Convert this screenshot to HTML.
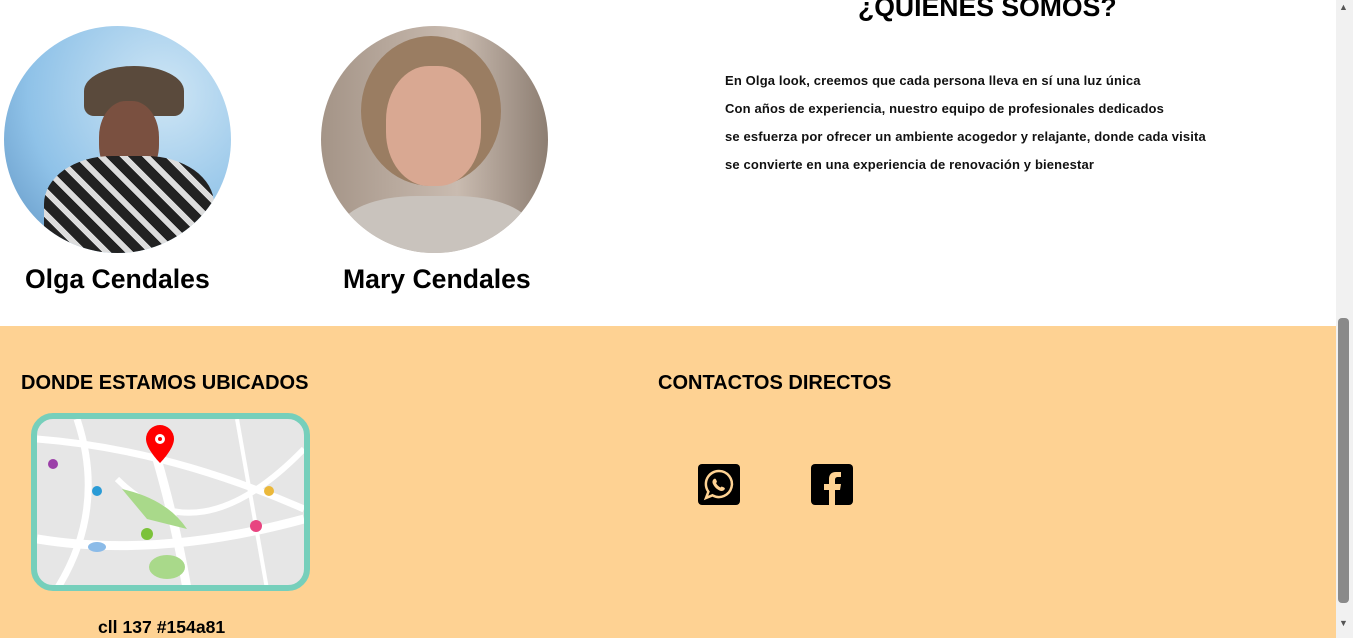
<!DOCTYPE html><html><head><style>
body{margin:0;width:1353px;height:638px;overflow:hidden;font-family:"Liberation Sans",sans-serif;background:#fff;position:relative}
.a{position:absolute}
.c{border-radius:50%;width:227px;height:227px;overflow:hidden}
.n{font-size:26.6px;font-weight:bold;white-space:nowrap}
.p{font-size:13px;letter-spacing:0.15px;font-weight:bold;line-height:28px;color:#111;white-space:nowrap}
</style></head><body>
<div class="a c" style="left:4px;top:26px;background:radial-gradient(circle at 70% 30%,#cfe6f5,#8fc2e8 60%,#5b8fbf)">
 <div class="a" style="left:80px;top:40px;width:100px;height:50px;border-radius:50% 50% 10px 10px;background:#5a4a3c"></div>
 <div class="a" style="left:95px;top:75px;width:60px;height:80px;border-radius:45%;background:#7a5040"></div>
 <div class="a" style="left:40px;top:130px;width:170px;height:120px;border-radius:40% 40% 0 0;background:repeating-linear-gradient(45deg,#222 0 10px,#ddd 10px 16px)"></div>
</div>
<div class="a c" style="left:321px;top:26px;background:linear-gradient(90deg,#a49487,#c9bbb0 60%,#8d7e72)">
 <div class="a" style="left:40px;top:10px;width:140px;height:150px;border-radius:50%;background:#9a7d62"></div>
 <div class="a" style="left:65px;top:40px;width:95px;height:120px;border-radius:45%;background:#d9a892"></div>
 <div class="a" style="left:20px;top:170px;width:190px;height:80px;border-radius:40% 40% 0 0;background:#c9c3bd"></div>
</div>
<div class="a n" style="left:25px;top:264px">Olga Cendales</div>
<div class="a n" style="left:343px;top:264px">Mary Cendales</div>
<div class="a n" style="left:858px;top:-8px">¿QUIENES SOMOS?</div>
<div class="a p" style="left:725px;top:67px">En Olga look, creemos que cada persona lleva en sí una luz única<br>Con años de experiencia, nuestro equipo de profesionales dedicados<br>se esfuerza por ofrecer un ambiente acogedor y relajante, donde cada visita<br>se convierte en una experiencia de renovación y bienestar</div>
<div class="a" style="left:0;top:326px;width:1336px;height:312px;background:#fed293"></div>
<div class="a" style="left:21px;top:372px;font-size:20px;font-weight:bold;white-space:nowrap">DONDE ESTAMOS UBICADOS</div>
<div class="a" style="left:658px;top:372px;font-size:20px;font-weight:bold;white-space:nowrap">CONTACTOS DIRECTOS</div>
<div class="a" style="left:31px;top:413px;width:267px;height:166px;border:6px solid #76cfbb;border-radius:22px;overflow:hidden;background:#e6e6e6">
<svg width="267" height="166" viewBox="0 0 267 166"><g stroke="#fff" fill="none"><path d="M0 120 Q120 140 267 100" stroke-width="9"/><path d="M120 40 Q140 110 150 170" stroke-width="9"/><path d="M40 0 Q70 90 20 170" stroke-width="7"/><path d="M0 20 Q130 30 267 90" stroke-width="7"/><path d="M80 60 Q160 140 267 30" stroke-width="6"/><path d="M200 0 L230 170" stroke-width="4"/></g>
<path d="M85 70 Q130 80 150 110 L110 100Z" fill="#a9d98a"/><ellipse cx="130" cy="148" rx="18" ry="12" fill="#a9d98a"/><ellipse cx="60" cy="128" rx="9" ry="5" fill="#8bbbe8"/>
<path d="M123 6a14 14 0 0 1 14 14c0 10-14 24-14 24s-14-14-14-24a14 14 0 0 1 14-14z" fill="#f00"/><circle cx="123" cy="20" r="5" fill="#fff"/><circle cx="123" cy="20" r="2" fill="#f00"/>
<circle cx="16" cy="45" r="5" fill="#9b3fa8"/><circle cx="60" cy="72" r="5" fill="#2a9bd6"/><circle cx="232" cy="72" r="5" fill="#ebb83a"/><circle cx="219" cy="107" r="6" fill="#e84480"/><circle cx="110" cy="115" r="6" fill="#7cc23a"/></svg></div>
<div class="a" style="left:98px;top:617px;font-size:17.6px;font-weight:bold;white-space:nowrap">cll 137 #154a81</div>
<svg class="a" style="left:698px;top:464px" width="42" height="41" viewBox="0 0 42 41"><rect width="42" height="41" rx="4"/><path d="M21 7a13 13 0 1 1-6.5 24.3L8 34l2.4-6.3A13 13 0 0 1 21 7z" fill="none" stroke="#fed293" stroke-width="2.5"/><path d="M16 15c1-1 2 0 2.5 1.5l.5 1.5-1 1c1 2 2.5 3.5 4.5 4.5l1-1 1.5.5c1.5.5 2.5 1.5 1.5 2.5-1 1.5-3 2-5 1-3-1.5-5-3.5-6.5-6.5-1-2-.5-4 1-5z" fill="#fed293"/></svg>
<svg class="a" style="left:811px;top:464px" width="42" height="41" viewBox="0 0 42 41"><rect width="42" height="41" rx="4"/><path d="M24 41V26h5l1-6h-6v-4c0-2 1-3 3-3h3V8h-5c-5 0-7 3-7 7v5h-5v6h5v15z" fill="#fed293"/></svg>
<div class="a" style="left:1336px;top:0;width:17px;height:638px;background:#f1f1f1"></div>
<div class="a" style="left:1338px;top:318px;width:11px;height:285px;background:#8a8a8a;border-radius:4px"></div>
<div class="a" style="left:1339px;top:2px;font-size:9px;color:#555">▲</div>
<div class="a" style="left:1339px;top:618px;font-size:9px;color:#555">▼</div>
</body></html>
